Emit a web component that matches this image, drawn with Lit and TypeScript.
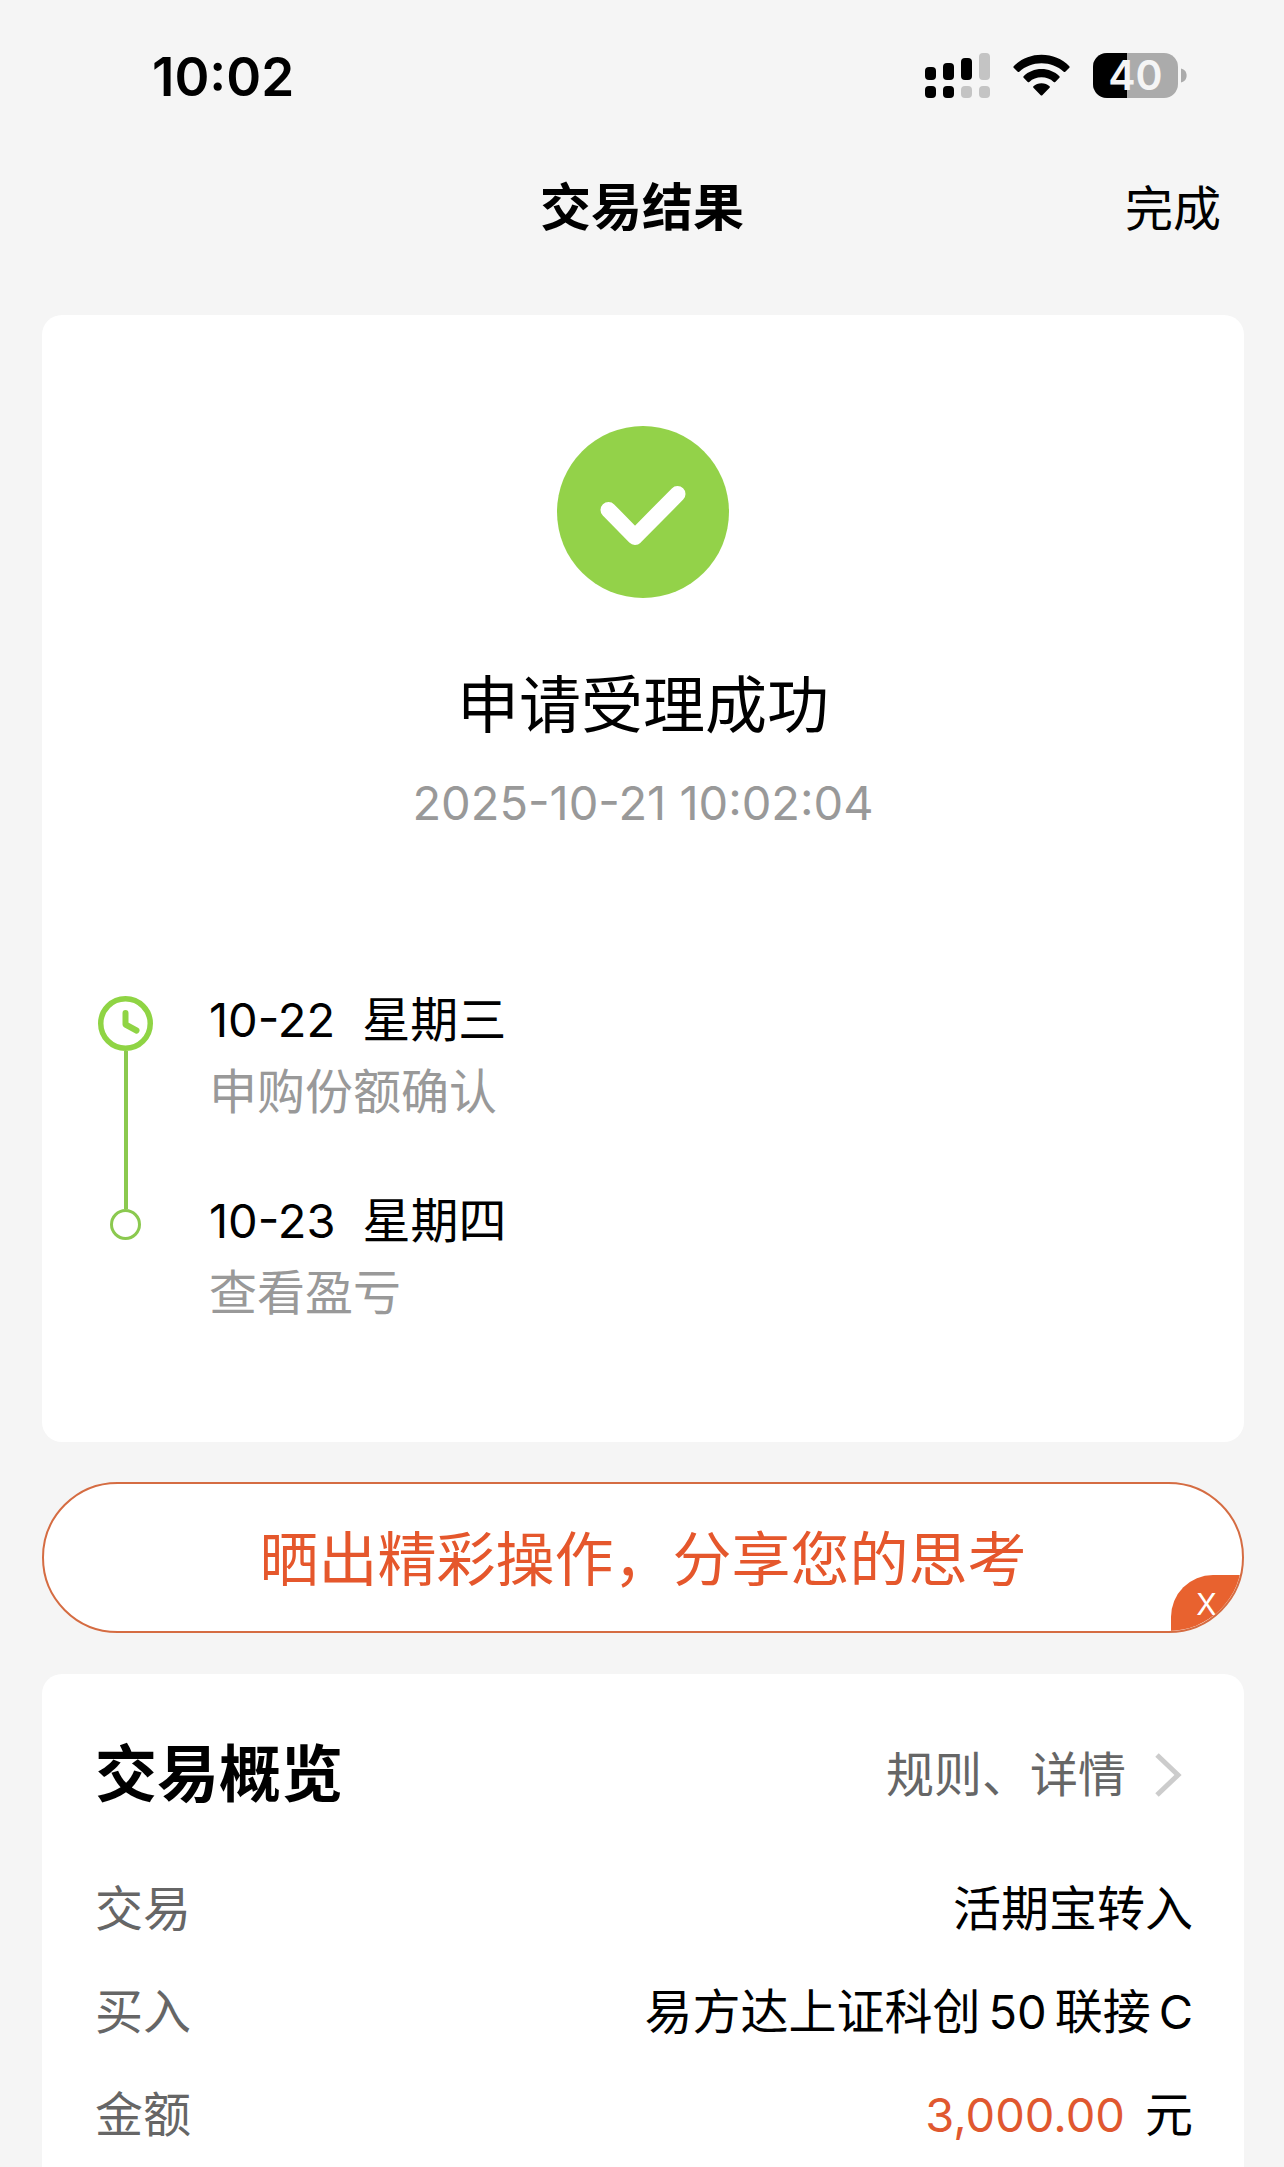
import { LitElement, html, css, svg, nothing } from "lit";
import { customElement, property, state } from "lit/decorators.js";

interface Step {
  date: string;
  weekday: string;
  note: string;
}

const STEPS: Step[] = [
  { date: "10-22", weekday: "星期三", note: "申购份额确认" },
  { date: "10-23", weekday: "星期四", note: "查看盈亏" },
];

@customElement("status-bar")
export class StatusBar extends LitElement {
  static styles = css`
    :host {
      display: flex;
      align-items: center;
      justify-content: space-between;
      padding: 40px 96px 28px 152px;
    }
    .time {
      font-size: 53px;
      line-height: 74px;
      font-weight: 600;
    }
    .icons {
      display: flex;
      align-items: center;
      gap: 23px;
      padding-bottom: 4px;
    }
    .icon {
      display: block;
    }
    .battery {
      display: grid;
      align-items: center;
    }
    .battery > * {
      grid-area: 1 / 1;
    }
    .level {
      width: 85px;
      color: #f5f5f5;
      font-size: 41px;
      font-weight: 600;
      line-height: 56px;
      text-align: center;
    }
  `;

  render() {
    const tops = [14, 10, 5, 0];
    return html`
      <span class="time">10:02</span>
      <div class="icons">
        <svg class="icon" width="65" height="45" viewBox="0 0 65 45" role="img" aria-label="信号">
          ${tops.map(
            (top, i) => svg`
              <rect x=${i * 18} y=${top} width="11" height=${27 - top} rx="4" fill=${i < 3 ? "#000" : "#c4c4c4"}></rect>
              <rect x=${i * 18} y="33" width="11" height="12" rx="4" fill=${i < 2 ? "#000" : "#c4c4c4"}></rect>`,
          )}
        </svg>
        <svg class="icon" width="57" height="43" viewBox="0 0 58 43" role="img" aria-label="无线网络">
          <path d="M29 0.5C40 0.5 50 4.800 57.300 12Q58 12.800 57.300 13.600L53.200 17.700Q52.400 18.400 51.600 17.700C45.500 12 37.600 9 29 9S12.500 12 6.400 17.700Q5.600 18.400 4.800 17.700L0.700 13.600Q0 12.800 0.700 12C8 4.800 18 0.500 29 0.500Z"></path>
          <path d="M29 15C36 15 42.400 17.700 47.200 22.200Q48 23 47.200 23.800L43 28Q42.200 28.700 41.400 28C38 25 33.800 23.400 29 23.400S20 25 16.600 28Q15.800 28.700 15 28L10.800 23.800Q10 23 10.800 22.200C15.600 17.700 22 15 29 15Z"></path>
          <path d="M29 29.300C32.200 29.300 35 30.400 37.200 32.400Q38 33.200 37.200 34L29.800 41.600Q29 42.300 28.200 41.600L20.800 34Q20 33.200 20.800 32.400C23 30.400 25.800 29.300 29 29.300Z"></path>
        </svg>
        <div class="battery">
          <svg class="icon" width="95" height="45" viewBox="0 0 95 45" role="img" aria-label="电量">
            <rect width="85" height="45" rx="14" fill="#ababab"></rect>
            <path d="M14 0H34V45H14A14 14 0 0 1 0 31V14A14 14 0 0 1 14 0Z"></path>
            <path d="M88 15.500C95.500 17 95.500 28 88 29.500Z" fill="#ababab"></path>
          </svg>
          <span class="level">40</span>
        </div>
      </div>
    `;
  }
}

@customElement("progress-steps")
export class ProgressSteps extends LitElement {
  @property({ attribute: false }) steps: Step[] = [];

  static styles = css`
    :host {
      display: block;
    }
    .list {
      margin: 0;
      padding: 0;
      list-style: none;
    }
    .step {
      display: flex;
      gap: 53px;
    }
    .rail {
      display: flex;
      flex: none;
      flex-direction: column;
      align-items: center;
      width: 61px;
    }
    .lead {
      height: 14px;
    }
    .line {
      width: 4px;
      background: #8bc94f;
    }
    .joint {
      height: 26px;
    }
    .tail {
      flex: 1;
    }
    .icon {
      display: block;
      flex: none;
    }
    .body {
      padding: 2px 0 55px;
      line-height: 72px;
      font-size: 48px;
    }
    .step:last-child .body {
      padding-bottom: 0;
    }
    .when {
      display: flex;
      gap: 27px;
    }
    .note {
      color: #999;
    }
    .digits {
      font-size: 47px;
    }
  `;

  render() {
    const last = this.steps.length - 1;
    return html`
      <ol class="list">
        ${this.steps.map(
          (s, i) => html`
            <li class="step">
              <div class="rail" aria-hidden="true">
                ${i === 0
                  ? html`<span class="lead"></span>
                      <svg class="icon" width="55" height="55" viewBox="0 0 55 55" fill="none" stroke="#8fd444">
                        <circle cx="27.500" cy="27.500" r="24.750" stroke-width="5.500"></circle>
                        <path d="M27.500 17V28.500L38.500 34.500" stroke-width="6" stroke-linecap="round" stroke-linejoin="round"></path>
                      </svg>`
                  : html`<span class="line joint"></span>
                      <svg class="icon" width="31" height="31" viewBox="0 0 31 31" fill="none" stroke="#8bc94f">
                        <circle cx="15.500" cy="15.500" r="14" stroke-width="3"></circle>
                      </svg>`}
                ${i < last ? html`<span class="line tail"></span>` : nothing}
              </div>
              <div class="body">
                <div class="when"><span class="digits">${s.date}</span><span>${s.weekday}</span></div>
                <div class="note">${s.note}</div>
              </div>
            </li>
          `,
        )}
      </ol>
    `;
  }
}

@customElement("app-root")
export class AppRoot extends LitElement {
  @state() private bannerOpen = true;

  static styles = css`
    :host {
      display: flex;
      flex-direction: column;
      box-sizing: border-box;
      min-height: 100vh;
      background: #f5f5f5;
      color: #000;
      font-family: Inter, "Noto Sans CJK SC", sans-serif;
      font-size: 48px;
    }
    button {
      margin: 0;
      padding: 0;
      border: 0;
      background: none;
      color: inherit;
      font: inherit;
      cursor: pointer;
    }
    .nav {
      display: grid;
      grid-template-columns: 1fr auto 1fr;
      align-items: baseline;
      padding: 29px 63px 69px;
      line-height: 74px;
    }
    .page-title {
      grid-column: 2;
      margin: 0;
      font-size: 51px;
      font-weight: 600;
    }
    .done {
      justify-self: end;
    }
    .content {
      display: flex;
      flex: 1;
      flex-direction: column;
      padding: 0 40px 0 42px;
    }
    .card {
      border-radius: 20px;
      background: #fff;
    }
    .result {
      display: flex;
      flex-direction: column;
      padding: 111px 53px 113px;
    }
    .tick {
      display: block;
      align-self: center;
    }
    .headline {
      margin: 63px 0 22px;
      font-size: 62px;
      line-height: 90px;
      font-weight: 400;
      text-align: center;
    }
    .stamp {
      color: #999;
      font-size: 47px;
      line-height: 60px;
      text-align: center;
    }
    .steps {
      margin-top: 149px;
    }
    .banner {
      position: relative;
      margin: 40px 0 41px;
      border: 2px solid #d56c42;
      border-radius: 76px;
      background: #fff;
      overflow: hidden;
    }
    .share {
      display: block;
      width: 100%;
      padding-top: 4px;
      color: #e5572c;
      font-size: 59px;
      line-height: 143px;
    }
    .close {
      position: absolute;
      right: -2px;
      bottom: -2px;
      width: 73px;
      height: 58px;
      padding-right: 2px;
      border-top-left-radius: 42px;
      background: #e8622f;
      color: #fff;
      font-size: 30px;
      font-weight: 400;
      line-height: 58px;
    }
    .overview {
      flex: 1;
      padding: 56px 51px 0 53px;
      border-radius: 20px 20px 0 0;
    }
    .overview-head {
      display: flex;
      align-items: center;
      justify-content: space-between;
      margin-bottom: 37px;
      line-height: 90px;
    }
    .overview-title {
      margin: 0;
      font-size: 62px;
      font-weight: 600;
    }
    .rules {
      display: flex;
      align-items: center;
      gap: 28px;
      padding-right: 11px;
      color: #666;
      text-decoration: none;
    }
    .facts {
      margin: 0;
    }
    .fact {
      display: flex;
      justify-content: space-between;
      gap: 32px;
      line-height: 103px;
    }
    .label {
      color: #666;
    }
    .value {
      display: flex;
      gap: 8px;
      margin: 0;
    }
    .money {
      gap: 20px;
    }
    .number {
      font-size: 47px;
    }
    .amount {
      color: #e0582f;
    }
  `;

  private closeBanner() {
    this.bannerOpen = false;
  }

  render() {
    return html`
      <status-bar></status-bar>
      <header class="nav">
        <h1 class="page-title">交易结果</h1>
        <button class="done" type="button">完成</button>
      </header>
      <main class="content">
        <section class="card result">
          <svg class="tick" width="172" height="172" viewBox="0 0 172 172" aria-hidden="true">
            <circle cx="86" cy="86" r="86" fill="#93d249"></circle>
            <path d="M51.500 84L78 111L120.500 68" fill="none" stroke="#fff" stroke-width="16" stroke-linecap="round" stroke-linejoin="round"></path>
          </svg>
          <h2 class="headline">申请受理成功</h2>
          <time class="stamp" datetime="2025-10-21T10:02:04">2025-10-21 10:02:04</time>
          <progress-steps class="steps" .steps=${STEPS}></progress-steps>
        </section>

        ${this.bannerOpen
          ? html`<div class="banner">
              <button class="share" type="button">晒出精彩操作，分享您的思考</button>
              <button class="close" type="button" aria-label="关闭" @click=${this.closeBanner}>X</button>
            </div>`
          : nothing}

        <section class="card overview">
          <div class="overview-head">
            <h2 class="overview-title">交易概览</h2>
            <a class="rules" href="#rules">
              <span>规则、详情</span>
              <svg width="28" height="44" viewBox="0 0 28 44" fill="none" stroke="#ccc" stroke-width="5" aria-hidden="true">
                <path d="M3 2L24 22L3 42"></path>
              </svg>
            </a>
          </div>
          <dl class="facts">
            <div class="fact">
              <dt class="label">交易</dt>
              <dd class="value">活期宝转入</dd>
            </div>
            <div class="fact">
              <dt class="label">买入</dt>
              <dd class="value">
                <span>易方达上证科创</span><span class="number">50</span><span>联接</span><span class="number">C</span>
              </dd>
            </div>
            <div class="fact">
              <dt class="label">金额</dt>
              <dd class="value money"><span class="number amount">3,000.00</span><span>元</span></dd>
            </div>
          </dl>
        </section>
      </main>
    `;
  }
}
